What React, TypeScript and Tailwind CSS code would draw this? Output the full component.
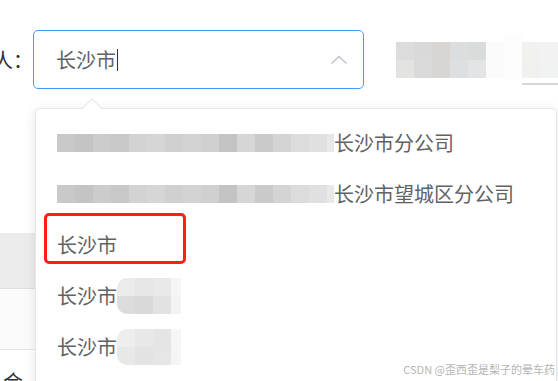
import React from "react";

const cjk = { fontFamily: '"Noto Sans CJK SC", "Microsoft YaHei", sans-serif' };

// pixelated mosaic blocks (redacted bits in the screenshot)
function Mosaic({ rows, cell = 18, w, className = "" }: { rows: string[][]; cell?: number; w?: number; className?: string }) {
  return (
    <div className={"flex flex-col " + className}>
      {rows.map((r, i) => (
        <div key={i} className="flex">
          {r.map((c, j) => (
            <div key={j} style={{ background: c, width: j === r.length - 1 && w ? w : cell, height: cell }} />
          ))}
        </div>
      ))}
    </div>
  );
}

const longBlur = [
  ["#c9c9c9", "#c4c4c4", "#cccccc", "#c8c8c8", "#d3d3d3", "#d6d6d6", "#d0d0d0", "#d3d3d3", "#d0d0d0", "#c3c3c3", "#d6d6d6", "#cacaca", "#d4d4d4", "#dcdcdc", "#e0e0e0", "#e8e8e8"],
];

function Item({ children }: { children: React.ReactNode }) {
  return <div className="h-[51px] flex items-center pl-[21px] text-[20px] text-[#606266] whitespace-nowrap">{children}</div>;
}

export default function App() {
  return (
    <div className="relative w-[558px] h-[381px] overflow-hidden bg-white" style={cjk}>
      {/* form row */}
      <div className="flex items-start pt-[30px]">
        <div className="ml-[-7px] w-[40px] h-[59px] flex items-center text-[20px] text-[#303133]">人：</div>
        <div className="w-[334px] h-[59px] border border-[#409eff] rounded-[5px] flex items-center pl-[22px] pr-[15px]">
          <span className="text-[20px] text-[#606266]">长沙市</span>
          <span className="w-px h-[22px] bg-[#303133] ml-px" />
          <svg className="ml-auto" width="18" height="10" viewBox="0 0 18 10" fill="none">
            <path d="M1.5 8.5 L9 1.5 L16.5 8.5" stroke="#c0c4cc" strokeWidth="1.6" />
          </svg>
        </div>
        <div className="ml-[32px] mt-[12px] flex">
          <Mosaic
            rows={[
              ["#dcdcdc", "#d9d9d9", "#d8d5d3", "#dcdddf", "#dadcdc"],
              ["#e3e3e1", "#dadada", "#d8d5d3", "#dedfe1", "#e3e4e6"],
            ]}
          />
          <div className="w-[18px] h-[36px] bg-[#fbfbfb]" />
          <div className="w-[18px] h-[46px] -mt-[8px] bg-[#fdfdfd]" />
          <div className="flex flex-col">
            <Mosaic rows={[["#f1f1ef", "#f2f2f2"], ["#f0f0ee", "#f1f2f2"]]} />
            <div className="mt-[5px] h-[2px] bg-[#d6d6d6]" />
          </div>
        </div>
      </div>

      {/* page content behind the popper */}
      <div className="mt-[144px] w-[35px]">
        <div className="h-[56px] bg-[#ececec] border-b border-[#dedede]" />
        <div className="h-[61px] border-b border-[#e3e3e3] bg-[#fbfbfb]" />
        <div className="pl-[3px] pt-[22px] text-[20px] leading-[20px] text-[#303133]">合约</div>
      </div>

      {/* select dropdown */}
      <div className="absolute left-[35px] top-[108px] w-[522px] h-[290px] bg-white border border-[#e4e7ed] rounded-[4px] shadow-[0_2px_12px_rgba(0,0,0,0.1)]">
        <div className="absolute left-[49px] top-[-8px] w-[14px] h-[14px] rotate-45 bg-white border-l border-t border-[#e4e7ed]" />
        <div className="pt-[8px]">
          <Item>
            <Mosaic rows={longBlur} w={7} />
            <span>长沙市分公司</span>
          </Item>
          <Item>
            <Mosaic rows={longBlur} w={7} />
            <span>长沙市望城区分公司</span>
          </Item>
          <Item>长沙市</Item>
          <Item>
            <span>长沙市</span>
            <Mosaic
              className="rounded-l-[10px] overflow-hidden"
              rows={[
                ["#ebebeb", "#e6e6e6", "#e9e9e9", "#f5f5f5"],
                ["#dcdcdc", "#d9d9d9", "#e2e2e2", "#f3f3f3"],
              ]}
              w={10}
            />
          </Item>
          <Item>
            <span>长沙市</span>
            <Mosaic
              className="rounded-l-[10px] overflow-hidden"
              rows={[
                ["#eeeeee", "#e8e8e8", "#e5e5e5", "#f6f6f6"],
                ["#e8e8e8", "#e3e3e3", "#e6e6e6", "#f5f5f5"],
              ]}
              w={10}
            />
          </Item>
        </div>
      </div>

      {/* red annotation box */}
      <div className="absolute left-[44px] top-[213px] w-[142px] h-[51px] border-[3px] border-[#ff1f1a] rounded-[5px]" />

      {/* watermark */}
      <div className="absolute right-[3px] bottom-[4px] text-[11px] text-[#b5b5b5] whitespace-nowrap">CSDN @歪西歪是梨子的晕车药</div>
    </div>
  );
}
